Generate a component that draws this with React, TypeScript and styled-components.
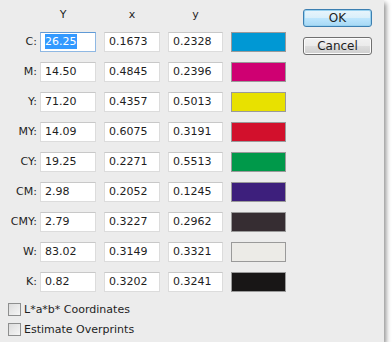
import styled, { createGlobalStyle } from 'styled-components';

const GlobalStyle = createGlobalStyle`
  html, body {
    margin: 0;
    padding: 0;
    background: #ffffff;
  }
  body {
    font-family: 'DejaVu Sans', 'Liberation Sans', sans-serif;
    font-size: 11px;
    color: #1e1e1e;
  }
`;

type Sample = { label: string; Y: string; x: string; y: string; color: string };

const samples: Sample[] = [
  { label: 'C:', Y: '26.25', x: '0.1673', y: '0.2328', color: '#0098d4' },
  { label: 'M:', Y: '14.50', x: '0.4845', y: '0.2396', color: '#cf0072' },
  { label: 'Y:', Y: '71.20', x: '0.4357', y: '0.5013', color: '#e8e100' },
  { label: 'MY:', Y: '14.09', x: '0.6075', y: '0.3191', color: '#d2102c' },
  { label: 'CY:', Y: '19.25', x: '0.2271', y: '0.5513', color: '#00994a' },
  { label: 'CM:', Y: '2.98', x: '0.2052', y: '0.1245', color: '#3d1f7c' },
  { label: 'CMY:', Y: '2.79', x: '0.3227', y: '0.2962', color: '#362d32' },
  { label: 'W:', Y: '83.02', x: '0.3149', y: '0.3321', color: '#ecebe7' },
  { label: 'K:', Y: '0.82', x: '0.3202', y: '0.3241', color: '#181616' },
];

const App = () => {
  return (
    <>
      <GlobalStyle />
      <Dialog>
        <Form>
          <Grid>
            <span />
            <Heading $shift={-5}>Y</Heading>
            <Heading>x</Heading>
            <Heading>y</Heading>
            <span />
            {samples.map((s, i) => (
              <Row key={s.label}>
                <Label>{s.label}</Label>
                <Field $focused={i === 0}>
                  {i === 0 ? <Selected>{s.Y}</Selected> : s.Y}
                </Field>
                <Field>{s.x}</Field>
                <Field>{s.y}</Field>
                <Swatch style={{ background: s.color }} />
              </Row>
            ))}
          </Grid>
          <Checks>
            <CheckRow>
              <Box />
              L*a*b* Coordinates
            </CheckRow>
            <CheckRow>
              <Box />
              Estimate Overprints
            </CheckRow>
          </Checks>
        </Form>
        <Buttons>
          <Button $primary>OK</Button>
          <Button>Cancel</Button>
        </Buttons>
      </Dialog>
    </>
  );
};

export default App;

const Dialog = styled.div`
  width: 384px;
  height: 342px;
  box-sizing: border-box;
  background: #ececec;
  box-shadow: 2px 3px 5px rgba(0, 0, 0, 0.45);
  display: flex;
  justify-content: space-between;
`;

const Form = styled.div`
  display: flex;
  flex-direction: column;
  padding-top: 8px;
`;

const Grid = styled.div`
  display: grid;
  grid-template-columns: 32px 56px 56px 55px 55px;
  grid-auto-rows: 20px;
  column-gap: 8px;
  row-gap: 10px;
  grid-template-rows: 14px;
`;

const Row = styled.div`
  display: contents;
`;

const Heading = styled.div<{ $shift?: number }>`
  text-align: center;
  line-height: 14px;
  margin-left: ${p => (p.$shift ?? 0) * 2}px;
`;

const Label = styled.div`
  text-align: right;
  margin-right: -5px;
  line-height: 20px;
`;

const Field = styled.div<{ $focused?: boolean }>`
  box-sizing: border-box;
  height: 20px;
  background: #ffffff;
  border: 1px solid ${p => (p.$focused ? '#8fb8e3' : '#dcdcdc')};
  border-top-color: ${p => (p.$focused ? '#5f9ad6' : '#c8c8c8')};
  padding-left: 4px;
  line-height: 18px;
  white-space: nowrap;
`;

const Selected = styled.span`
  background: #3399ff;
  color: #ffffff;
  padding: 1px 0;
`;

const Swatch = styled.div`
  box-sizing: border-box;
  height: 20px;
  border: 1px solid #9a9a9a;
`;

const Checks = styled.div`
  display: flex;
  flex-direction: column;
  gap: 6px;
  margin-top: 10px;
  padding-left: 8px;
`;

const CheckRow = styled.label`
  display: flex;
  align-items: center;
  gap: 3px;
  height: 14px;
`;

const Box = styled.span`
  box-sizing: border-box;
  width: 13px;
  height: 13px;
  border: 1px solid #8e8f8f;
  background: linear-gradient(135deg, #dcdcdc, #f6f6f6);
`;

const Buttons = styled.div`
  display: flex;
  flex-direction: column;
  gap: 10px;
  padding: 9px 12px 0 0;
`;

const Button = styled.button<{ $primary?: boolean }>`
  box-sizing: border-box;
  width: 69px;
  height: 18px;
  padding: 0;
  font: inherit;
  font-size: 12px;
  color: #1e1e1e;
  border-radius: 3px;
  border: 1px solid ${p => (p.$primary ? '#3c7fb1' : '#707070')};
  background: ${p =>
    p.$primary
      ? 'linear-gradient(#e8f5fc 0%, #d9effa 50%, #bee6fd 51%, #a7d9f5 100%)'
      : 'linear-gradient(#f2f2f2 0%, #ebebeb 50%, #dddddd 51%, #cfcfcf 100%)'};
  box-shadow: ${p => (p.$primary ? 'inset 0 0 0 1px #98d1ef' : 'inset 0 0 0 1px #fcfcfc')};
`;
